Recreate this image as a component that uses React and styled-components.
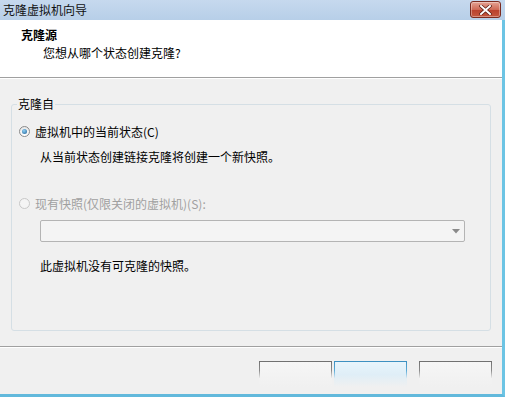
import React from 'react';
import styled, { createGlobalStyle } from 'styled-components';

const GlobalStyle = createGlobalStyle`
  html, body {
    margin: 0;
    padding: 0;
    background: #f0f0f0;
  }
  body {
    font-family: "Noto Sans CJK SC", "Liberation Sans", sans-serif;
    font-size: 12px;
    color: #000;
  }
`;

const Window = styled.div`
  width: 505px;
  height: 397px;
  display: flex;
  flex-direction: column;
  overflow: hidden;
  background: #f0f0f0;
`;

const TitleBar = styled.div`
  height: 20px;
  flex: none;
  display: flex;
  align-items: center;
  justify-content: space-between;
  padding-left: 3px;
  background: linear-gradient(#c6d9ee, #b7cfe8);
  .title {
    font-size: 12px;
    line-height: 20px;
    color: #111;
  }
`;

const CloseButton = styled.div`
  width: 29px;
  height: 15px;
  margin-right: 4px;
  margin-top: 1px;
  align-self: flex-start;
  border: 1px solid #7b2b20;
  border-radius: 3px;
  background: linear-gradient(#e5a394, #cf6a56 50%, #b9402c 51%, #c4573f);
  display: flex;
  align-items: center;
  justify-content: center;
  box-shadow: inset 0 0 0 1px rgba(255, 255, 255, 0.35);
`;

const Frame = styled.div`
  flex: 1;
  display: flex;
  flex-direction: column;
  border-right: 3px solid #6cc4e4;
  border-bottom: 3px solid #62b9dc;
  min-height: 0;
`;

const Header = styled.div`
  height: 58px;
  flex: none;
  background: #fff;
  border-bottom: 1px solid #a0a0a0;
  padding: 6px 0 0 21px;
  box-sizing: border-box;
  h1 {
    margin: 0;
    font-size: 12px;
    font-weight: bold;
    line-height: 18px;
  }
  p {
    margin: 0 0 0 22px;
    line-height: 18px;
  }
`;

const Body = styled.div`
  flex: 1;
  display: flex;
  flex-direction: column;
  padding: 16px 11px 0 11px;
  border-top: 1px solid #fff;
`;

const Group = styled.fieldset`
  margin: 0;
  width: 480px;
  height: 236px;
  box-sizing: border-box;
  border: 1px solid #d5dfe5;
  border-radius: 3px;
  padding: 0 0 0 7px;
  display: flex;
  flex-direction: column;
  legend {
    padding: 0 1px;
    margin-left: -2px;
    line-height: 18px;
  }
`;

const RadioRow = styled.label`
  display: flex;
  align-items: center;
  gap: 5px;
  height: 18px;
  margin-top: ${(p) => p.$top}px;
  color: ${(p) => (p.$disabled ? '#a0a0a0' : '#000')};
`;

const RadioDot = styled.span`
  width: 11px;
  height: 11px;
  border-radius: 50%;
  box-sizing: border-box;
  border: 1px solid ${(p) => (p.$disabled ? '#c8c8c8' : '#8a8a8a')};
  background: ${(p) => (p.$disabled ? '#f4f4f4' : 'linear-gradient(#e8e8e8, #fff)')};
  display: flex;
  align-items: center;
  justify-content: center;
  &::after {
    content: '';
    display: ${(p) => (p.$checked ? 'block' : 'none')};
    width: 5px;
    height: 5px;
    border-radius: 50%;
    background: radial-gradient(circle at 40% 35%, #8fd0f4, #1c5f95);
  }
`;

const Note = styled.div`
  margin-left: ${(p) => p.$indent}px;
  margin-top: ${(p) => p.$top}px;
  line-height: 18px;
`;

const Combo = styled.div`
  margin: 8px 0 0 21px;
  width: 425px;
  height: 22px;
  box-sizing: border-box;
  border: 1px solid #b4b4b4;
  border-radius: 2px;
  background: #f4f4f4;
  display: flex;
  align-items: center;
  justify-content: flex-end;
  padding-right: 4px;
`;

const Separator = styled.div`
  margin-top: 15px;
  height: 1px;
  background: #a0a0a0;
  margin-left: -11px;
  margin-right: -11px;
  border-bottom: 1px solid #fff;
`;

const ButtonRow = styled.div`
  display: flex;
  justify-content: flex-end;
  margin-top: 13px;
  margin-right: -1px;
  gap: 2px;
  .spacer {
    width: 8px;
  }
`;

const Button = styled.div`
  width: 73px;
  height: 26px;
  box-sizing: border-box;
  border-style: solid;
  border-width: 1px 1px 0 1px;
  border-image: ${(p) =>
      p.$focused
        ? 'linear-gradient(#3c8fc0, #5aaad6 35%, rgba(240,240,240,0) 65%)'
        : 'linear-gradient(#707070, #8a8a8a 35%, rgba(240,240,240,0) 65%)'}
    1;
  background: ${(p) =>
    p.$focused
      ? 'linear-gradient(#e8f5fc, #dfeef7 50%, #f0f0f0)'
      : 'linear-gradient(#f6f6f6, #f0f0f0)'};
`;

const App = () => (
  <>
    <GlobalStyle />
    <Window>
      <TitleBar>
        <span className="title">克隆虚拟机向导</span>
        <CloseButton>
          <svg width="13" height="10" viewBox="0 0 13 10">
            <path
              d="M2 1 L11 9 M11 1 L2 9"
              stroke="#5a1a10"
              strokeWidth="3.4"
              strokeLinecap="square"
            />
            <path
              d="M2 1 L11 9 M11 1 L2 9"
              stroke="#fff"
              strokeWidth="2"
              strokeLinecap="square"
            />
          </svg>
        </CloseButton>
      </TitleBar>
      <Frame>
        <Header>
          <h1>克隆源</h1>
          <p>您想从哪个状态创建克隆?</p>
        </Header>
        <Body>
          <Group>
            <legend>克隆自</legend>
            <RadioRow $top={9}>
              <RadioDot $checked />
              <span>虚拟机中的当前状态(C)</span>
            </RadioRow>
            <Note $indent={21} $top={8}>
              从当前状态创建链接克隆将创建一个新快照。
            </Note>
            <RadioRow $top={28} $disabled>
              <RadioDot $disabled />
              <span>现有快照(仅限关闭的虚拟机)(S):</span>
            </RadioRow>
            <Combo>
              <svg width="8" height="5" viewBox="0 0 8 5">
                <path d="M0 0 H8 L4 4.5 Z" fill="#8a8a8a" />
              </svg>
            </Combo>
            <Note $indent={21} $top={15}>
              此虚拟机没有可克隆的快照。
            </Note>
          </Group>
          <Separator />
          <ButtonRow>
            <Button />
            <Button $focused />
            <span className="spacer" />
            <Button />
          </ButtonRow>
        </Body>
      </Frame>
    </Window>
  </>
);

export default App;
